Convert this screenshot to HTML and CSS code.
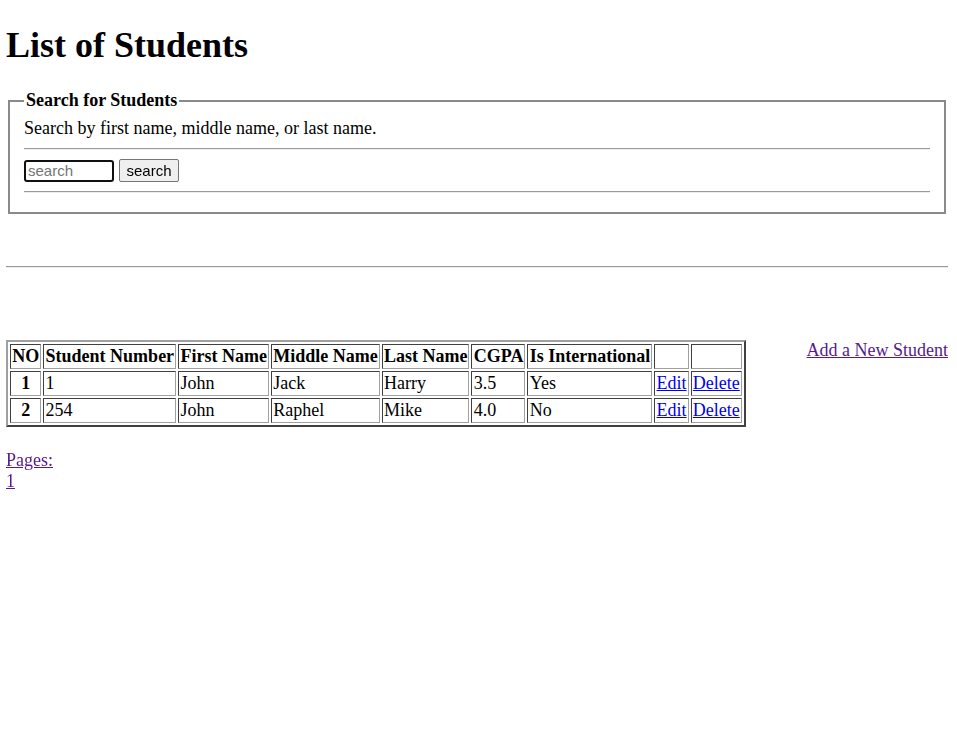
FILE: index.html
```html
<!DOCTYPE html>
<html>
<head>
<meta charset="utf-8">
<title>List of Students</title>
<link rel="stylesheet" href="styles.css">
</head>
<body>
<h1 class="title">List of Students</h1>
<fieldset class="search-box">
  <legend class="search-legend">Search for Students</legend>
  <div class="search-hint">Search by first name, middle name, or last name.</div>
  <hr class="rule">
  <form class="search-form">
    <input class="search-input" type="text" placeholder="search" autofocus>
    <button class="search-button" type="button">search</button>
  </form>
  <hr class="rule">
</fieldset>
<hr class="divider">
<div class="listing">
  <a class="add-link" href="#add">Add a New Student</a>
  <table class="students">
    <tr>
      <th>NO</th><th>Student Number</th><th>First Name</th><th>Middle Name</th><th>Last Name</th><th>CGPA</th><th>Is International</th><th></th><th></th>
    </tr>
    <tr>
      <th>1</th><td>1</td><td>John</td><td>Jack</td><td>Harry</td><td>3.5</td><td>Yes</td><td><a class="action" href="#e1">Edit</a></td><td><a class="action" href="#d1">Delete</a></td>
    </tr>
    <tr>
      <th>2</th><td>254</td><td>John</td><td>Raphel</td><td>Mike</td><td>4.0</td><td>No</td><td><a class="action" href="#e2">Edit</a></td><td><a class="action" href="#d2">Delete</a></td>
    </tr>
  </table>
</div>
<div class="pages">
  <a class="page-link" href="#pages">Pages:</a><br>
  <a class="page-link" href="#p1">1</a>
</div>
</body>
</html>
```
FILE: styles.css
```css
html {
  font-family: "Liberation Serif", "Times New Roman", serif;
  font-size: 18px;
  color: #000;
  background: #fff;
}
body {
  margin: 0 9px 0 6px;
}
.title {
  font-size: 36px;
  font-weight: bold;
  margin: 24px 0 24px 0;
  line-height: normal;
}
.search-box {
  margin: 0 2px 0 2px;
  padding: 7px 14px 10px 14px;
  border-color: #8a8a8a;
  border-style: solid;
  border-width: 2px;
  box-shadow: inset 1px 1px 0 #fff;
}
.search-legend {
  font-weight: bold;
  padding: 0 2px;
}
.search-hint {
  margin: 0;
}
.rule {
  margin: 9px 0;
  border: 0;
  border-top: 1px solid #9a9a9a;
  border-bottom: 1px solid #eeeeee;
  height: 0;
}
.search-form {
  margin: 0;
  display: flex;
  align-items: center;
  gap: 5px;
  height: 23px;
}
.search-input {
  box-sizing: border-box;
  width: 90px;
  height: 22px;
  margin: 0;
  padding: 1px 2px;
  font-family: "Liberation Sans", Arial, sans-serif;
  font-size: 15px;
  border: 2px solid #101010;
  border-radius: 3px;
  outline: none;
  color: #000;
}
.search-input::placeholder {
  color: #757575;
}
.search-button {
  box-sizing: border-box;
  width: 60px;
  height: 23px;
  margin: 0;
  padding: 0 6px;
  font-family: "Liberation Sans", Arial, sans-serif;
  font-size: 15px;
  color: #000;
  background: #efefef;
  border: 1px solid #767676;
  border-radius: 2px;
}
.divider {
  margin: 52px 0 0 0;
  border: 0;
  border-top: 1px solid #9a9a9a;
  border-bottom: 1px solid #eeeeee;
  height: 0;
}
.listing {
  margin-top: 72px;
}
.listing::after {
  content: "";
  display: block;
  clear: both;
}
.students {
  float: left;
  border-collapse: separate;
  border-spacing: 2px;
  border-width: 2px;
  border-style: solid;
  border-color: #a0a0a0 #404040 #404040 #a0a0a0;
}
.students th,
.students td {
  border: 1px solid;
  border-color: #404040 #a0a0a0 #a0a0a0 #404040;
  padding: 1px 1px 1px 1.3px;
  line-height: 21px;
  vertical-align: middle;
}
.students th {
  font-weight: bold;
  text-align: center;
}
.students td {
  text-align: left;
}
.action {
  color: #0000ee;
}
.add-link {
  float: right;
  color: #551a8b;
  line-height: 21px;
}
.pages {
  margin-top: 23px;
  line-height: 20.5px;
}
.page-link {
  color: #551a8b;
}
```
